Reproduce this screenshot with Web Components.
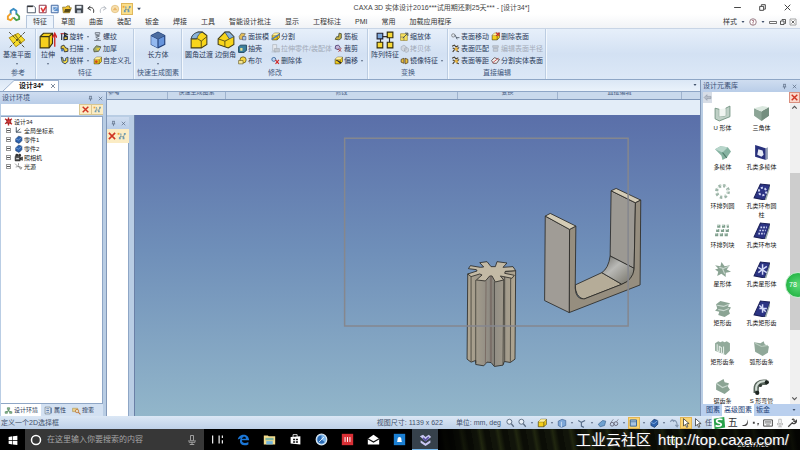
<!DOCTYPE html>
<html lang="zh-CN">
<head>
<meta charset="utf-8">
<title>CAXA 3D 实体设计</title>
<style>
html,body{margin:0;height:100%}
body{font:7px/10px "Liberation Sans","Noto Sans CJK SC",sans-serif;color:#2b3b5a;background:#000;overflow:hidden}
</style>
</head>
<body>
<cad-app></cad-app>
<script>
const BASE = `*{box-sizing:border-box}
button,input{font:inherit;color:inherit;background:none;border:0;padding:0;margin:0}
button{white-space:nowrap}`;

function define(tag, css, html, setup) {
  const t = document.createElement('template');
  customElements.define(tag, class extends HTMLElement {
    connectedCallback() {
      if (this.shadowRoot) return;
      t.innerHTML = `<style>${BASE}${css}</style>${typeof html === 'function' ? html(this) : html}`;
      this.attachShadow({mode: 'open'}).append(t.content.cloneNode(true));
      if (setup) setup(this);
    }
  });
}

const yellowBox = '<path d="M2 6l4-4h9v8l-4 4H2z" fill="#f5cf1c" stroke="#3c3510"/><path d="M2 6h9v8M11 6l4-4" fill="none" stroke="#3c3510"/><path d="M2 6l4-4h9l-4 4z" fill="#fff0a0"/>';
const holePlate = inner => `<path d="M1 14L7 1l9 1-5 14z" fill="#2b3484" stroke="#1b2058"/><path d="M11 16l5-14 .8 1L12.500 16z" fill="#9aa"/>${inner}`;
const ICONS = {
  logo: '<path d="M5 8V4l3-2 3 2v4" fill="none" stroke="#3d8fc4" stroke-width="2"/><path d="M5 7l-3 3v3l3 1 3-3" fill="none" stroke="#efa02a" stroke-width="2"/><path d="M11 7l3 3v3l-3 1-3-3" fill="none" stroke="#4aa04e" stroke-width="2"/>',
  newdoc: '<path d="M2 3h10l3 3v8H2z" fill="#fff" stroke="#4a5568" stroke-width="1.500"/><path d="M2 4h9" stroke="#333" stroke-width="2"/>',
  sheet: '<path d="M2 2h11v12H2z" fill="#fff" stroke="#843348" stroke-width="1.500"/><path d="M5 6l3 6 5-8" fill="none" stroke="#d33" stroke-width="2.500"/>',
  draft: '<path d="M2 2h11v12H2z" fill="#d7e6f8" stroke="#3f659e" stroke-width="1.500"/><path d="M5 5h7l2 6H6z" fill="#5c90cd"/><path d="M4 12l7-6" stroke="#fff"/>',
  folder: '<path d="M1 5h5l2-2h4v3h3l-3 8H2z" fill="#f1c233" stroke="#6d5b10"/><path d="M5 8h9l-2 5H3z" fill="#574a18"/>',
  save: '<path d="M2 2h12v12H2z" fill="#3d454f" stroke="#20252b"/><path d="M4 3h8v4H4z" fill="#e6edf3"/><path d="M5 10h6v4H5z" fill="#bcc6cf"/>',
  undo: '<path d="M3 7l4-4M3 7l5 3M3 7c5-3 11-1 9 7" fill="none" stroke="#333" stroke-width="1.500"/>',
  redo: '<path d="M13 7L9 3M13 7l-5 3M13 7C8 4 2 6 4 14" fill="none" stroke="#b5bbc2" stroke-width="1.500"/>',
  globe: '<circle cx="8" cy="8" r="6" fill="#f7dfae" stroke="#dcb56a"/><path d="M4 10l4-5 4 5z" fill="#eab768"/>',
  tree: '<path d="M5 4h2v2H5zM11 3h3v3h-3zM3 10h3v3H3zM9 10h3v3H9z" fill="#6e9db5"/><path d="M7 6l-3 5M12 5l-2 6M5 9h6" stroke="#59849a" fill="none"/><path d="M1 3h3v3H1z" fill="#f0a53a"/>',
  plane: '<path d="M1 6l8-4 6 6-8 6z" fill="#f7dc28" stroke="#a48410" stroke-width=".8"/><path d="M1 1l14 14M15 1L1 15" stroke="#40402a" stroke-dasharray="3 1" stroke-width=".8"/><path d="M6 3l6 8" stroke="#8c7614"/>',
  extrude: '<path d="M1 5l3-3h8v9l-3 4H1z" fill="#f5cf1c" stroke="#3c3510"/><path d="M1 5h8v10M9 5l3-3" fill="none" stroke="#3c3510"/><path d="M14 14V3M12 6l2-4 2 4" stroke="#cf2525" fill="none" stroke-width="1.200"/>',
  cuboid: '<path d="M2 4l6-3 6 3v8l-6 3-6-3z" fill="#6795dc" stroke="#203e78"/><path d="M2 4l6 3v8l-6-3z" fill="#94b9ef"/><path d="M2 4l6 3 6-3M8 7v8" fill="none" stroke="#203e78"/><path d="M2 4l6-3 6 3-6 3z" fill="#4c6c9f"/>',
  fillet: '<path d="M1 7c1-4 3-5 6-6h4l4 3v8l-5 3H1z" fill="#f8d51b" stroke="#403a15" stroke-width=".9"/><path d="M1 7c1-4 3-5 6-6h4c-3 1-4 3-5 6z" fill="#88b2d9" stroke="#273a55" stroke-width=".6"/><path d="M1 7h6l3 2v6M10 9l5-4" fill="none" stroke="#403a15" stroke-width=".7"/>',
  chamfer: '<path d="M1 7l6-6h4l4 4v7l-5 3-9-3z" fill="#f8d51b" stroke="#403a15" stroke-width=".9"/><path d="M7 1h4l4 4-4 2z" fill="#88b2d9" stroke="#273a55" stroke-width=".6"/><path d="M1 7l6 2 4-2M7 9v5" fill="none" stroke="#403a15" stroke-width=".7"/>',
  pattern: '<path d="M4 5h8M12 5v7M4 5v7" stroke="#333"/><path d="M1 2h5v5H1z" fill="#7ba7dc" stroke="#223"/><path d="M10 1h5v5h-5zM1 10h5v5H1zM10 10h5v5h-5z" fill="#f7d936" stroke="#332c08"/>',
  revolve: '<path d="M3 2v12M8 2l5 2-5 3zM7 9l6-1v5l-6 1z" fill="#f2d041" stroke="#20283a" stroke-width="2"/><path d="M1 3h6" stroke="#b33" stroke-width="2"/>',
  sweep: '<path d="M2 4l5-2 3 5 4 1v5l-6 1-2-6-4 1z" fill="#e7c93e" stroke="#23262f" stroke-width="1.500"/><path d="M2 9h4v4H2z" fill="#4474b7"/>',
  loft: '<path d="M2 2l2 9 5 3 5-4V2l-4 2v4L6 9 5 3z" fill="#f6dc45" stroke="#1c355f" stroke-width="1.500"/>',
  thread: '<path d="M4 1h8v3H4zM4 7h8M5 5l6 2-6 3 6 2-6 3M2 15h12" fill="none" stroke="#5b616b" stroke-width="1.300"/>',
  thicken: '<path d="M1 9l5-6 8 2-4 8-8 1z" fill="#9cab72" stroke="#4a4a30" stroke-width="1.300"/><path d="M5 8l8-1-4 5z" fill="#f1cf31"/>',
  hole: yellowBox + '<circle cx="6" cy="10" r="2.500" fill="#cc4a1c"/>',
  face: '<path d="M2 8l4-6 7 1-3 5v5H3z" fill="#e2bd5a" stroke="#4f4c40"/><path d="M8 8h6v6H8z" fill="#a8c6ea" stroke="#446"/>',
  shell: '<path d="M1 5l3-3h11v9l-4 4H1z" fill="#3c7f9d" stroke="#133a54" stroke-width="1.500"/><path d="M4 7h4v5H4z" fill="#e8e18d"/>',
  bool: '<circle cx="9" cy="7" r="5.500" fill="#f4d540" stroke="#5b4d16" stroke-width="1.300"/><path d="M1 8h8v6H1z" fill="#f4e594" stroke="#5b4d16"/>',
  split: yellowBox + '<path d="M1 13L15 4" stroke="#4978bd" stroke-width="2.500"/>',
  greydoc: '<path d="M3 1h7v11H3z" fill="#e5e8ed" stroke="#a2a9b3"/><path d="M6 8h9v6H6zM1 14h8" fill="#c2c8d0" stroke="#a2a9b3"/>',
  del: '<circle cx="5" cy="6" r="3.500" fill="#c1d6ef" stroke="#34629c" stroke-width="1.500"/><path d="M8 7l6 7M14 7l-6 7" stroke="#cf2929" stroke-width="2"/>',
  rib: '<path d="M2 13l3-5 3 1 1-7 4 1v8l-4 3z" fill="#c6b34a" stroke="#343b25" stroke-width="1.300"/>',
  trim: '<path d="M3 3l5-1 3 4-4 4-5-2z" fill="#c4b6d6" stroke="#4d3c72" stroke-width="1.500"/><path d="M7 9l6 4M13 7l-5 7" stroke="#a33" stroke-width="1.500"/>',
  offset: yellowBox + '<path d="M4 8c5 0 5 4 9 4" fill="none" stroke="#223" stroke-width="2"/>',
  scale: '<path d="M1 3h12v12H1z" fill="#f7e25d" stroke="#8a7420"/><path d="M1 9h6v6" fill="none" stroke="#556"/><path d="M5 11l8-8M9 2h5v5" fill="none" stroke="#345" stroke-width="1.500"/>',
  copy: '<path d="M2 5l5-3 4 3v5l-5 3-4-3zM8 8l4-2 3 2v5l-4 2-3-2z" fill="#d0d6de" stroke="#9aa3b0"/>',
  mirror: '<path d="M2 6l5-2v9l-5-2zM9 4l5 2v6l-5 2z" fill="#eabf3e" stroke="#4b3b20" stroke-width="1.300"/>',
  moveface: '<circle cx="4" cy="6" r="3" fill="#dfe7ef" stroke="#555"/><path d="M7 5l4 8M9 10h6" stroke="#4b5765" stroke-width="1.500"/>',
  matchface: '<path d="M2 4l4-2 3 3 4-2M3 7l5 2 5-2-3 5 4 2M3 14l4-5" fill="none" stroke="#3f3728" stroke-width="1.800"/><path d="M6 8l4-3 3 5-4 3z" fill="#e6b445"/>',
  delface: yellowBox + '<path d="M9 1l6 6M15 1L9 7" stroke="#c22" stroke-width="2"/>',
  radius: '<path d="M3 3h10v3H3zM4 8h8v5H4z" fill="#c9ced6" stroke="#9aa2ae"/>',
  splitface: '<path d="M1 8l5-5 9 3-5 7H4z" fill="#eee" stroke="#5c4a4a" stroke-width="1.500"/><path d="M3 12L13 4" stroke="#c44" stroke-width="1.500"/>',
  gear: '<path d="M2 3l12 10M2 12L14 3M8 1v14" stroke="#c12323" stroke-width="2.500"/><path d="M5 5h7v6H5z" fill="#d83a3a" stroke="#611"/>',
  axes: '<path d="M4 2v9h9M4 11l7-6" fill="none" stroke="#2c3d4c" stroke-width="1.500"/>',
  part: '<path d="M3 7l5-5 6 2v6l-5 5-6-3z" fill="#2d62ad" stroke="#102f5e"/><path d="M3 7l5 2 6-5" fill="none" stroke="#9ec5f1"/>',
  camera: '<path d="M2 6h9v8H2zM11 9l4-2v6l-4-2z" fill="#555" stroke="#111"/><circle cx="5" cy="4" r="2.500" fill="#333"/><circle cx="10" cy="4" r="2.500" fill="#333"/><path d="M4 9h5v2H4z" fill="#ddd"/>',
  light: '<path d="M2 3l4 4M3 9l4-1M8 2v4M7 7l5 6 2-3z" fill="#ddd" stroke="#555"/>',
  cross: '<path d="M3 3l10 10M13 3L3 13" stroke="#cf3323" stroke-width="2.500"/>',
  x: '<path d="M4 4l8 8M12 4l-8 8" stroke="#53647c" stroke-width="1.500"/>',
  pin: '<path d="M5 3h6M6 3v6M10 3v6M4 9h8M8 9v5" stroke="#53647c" stroke-width="1.500" fill="none"/>',
  wx: '<path d="M3 3l10 10M13 3L3 13" stroke="#333" stroke-width="1.600"/>',
  wmin: '<path d="M2 8h12" stroke="#333" stroke-width="1.600"/>',
  wmax: '<path d="M3 6h7v7H3zM6 5V3h7v8h-2" fill="none" stroke="#333" stroke-width="1.600"/>',
  mmin: '<path d="M1 7h14v4H1z" fill="#fff" stroke="#444" stroke-width="1.500"/>',
  mx: '<path d="M2 2h12v12H2z" fill="#fff" stroke="#777" stroke-width="1.300"/><path d="M5 5l6 6M11 5l-6 6" stroke="#444" stroke-width="1.600"/>',
  help: '<circle cx="8" cy="8" r="6.500" fill="#fff" stroke="#7a5560" stroke-width="1.500"/><path d="M6 6c1-3 5-1 3 1L8 9v1M8 11v2" stroke="#7a3344" fill="none" stroke-width="1.500"/>',
  caret: '<path d="M5 6h6l-3 4z" fill="#40506a"/>',
  up: '<path d="M4 10l4-4 4 4" fill="none" stroke="#555" stroke-width="2"/>',
  down: '<path d="M4 6l4 4 4-4" fill="none" stroke="#555" stroke-width="2"/>',
  back: '<path d="M2 8l5-5v3h7v4H7v3z" fill="#b7bec8" stroke="#8c96a4"/>',
  env: '<path d="M6 3h4v3H6zM2 10h4v3H2zM10 10h4v3h-4zM8 6v3M4 10l4-2 4 2" fill="#8fc08f" stroke="#4a7a5a"/>',
  prop: '<path d="M2 2h9v12H2z" fill="#fff" stroke="#456"/><path d="M4 5h5M4 8h5M4 11h5M13 3v10" stroke="#3c67a5" stroke-width="1.500"/>',
  find: '<path d="M1 4h9v6H1z" fill="#e9cf8b" stroke="#a98f48"/><circle cx="9" cy="9" r="3" fill="#fff8" stroke="#c27a3b" stroke-width="1.500"/><path d="M11 11l4 4" stroke="#c27a3b" stroke-width="2"/>',
  zoom: '<circle cx="7" cy="6" r="4" fill="#e9f0f7" stroke="#5a6b80" stroke-width="1.500"/><path d="M10 9l4 5" stroke="#5a6b80" stroke-width="2"/>',
  sbox: yellowBox,
  bluebox: '<path d="M2 5l6-3 6 2v8l-7 3-5-3z" fill="#7da7d8" stroke="#3b5f8e"/><path d="M7 6v9" stroke="#fff"/>',
  sketch: '<path d="M2 4l5 3 6-3M7 7v6l4 2" fill="none" stroke="#556b86" stroke-width="1.800"/>',
  brush: '<path d="M2 10l7-6 5 1-2 7-7 2z" fill="#6fa1cf" stroke="#355e8a"/>',
  glasses: '<circle cx="5" cy="10" r="3" fill="none" stroke="#667" stroke-width="1.500"/><circle cx="11" cy="9" r="3" fill="none" stroke="#667" stroke-width="1.500"/><path d="M3 7l4-5M12 6l3-4" stroke="#667"/>',
  frame: '<path d="M2 3h10v10H2z" fill="#a9c4e2" stroke="#3d6697" stroke-width="1.500"/><path d="M2 6h10" stroke="#3d6697"/>',
  turn: '<path d="M2 6l3-3 3 3M5 4c6-1 8 2 8 9M10 11l3 3 2-3" fill="none" stroke="#8497b0" stroke-width="1.800"/>',
  arrow: '<path d="M4 1v12l3-3 2 5 2-1-2-5h4z" fill="#fff" stroke="#333" stroke-width="1.200"/>',
  win: '<path d="M1 3l6-1v6H1zM8 2l7-1v7H8zM1 9h6v6l-6-1zM8 9h7v7l-7-1z" fill="#fff"/>',
  ring: '<circle cx="8" cy="8" r="6" fill="none" stroke="#fff" stroke-width="2"/>',
  mic: '<path d="M6 2h4v7H6zM4 8v3h8V8M8 11v3M5 14h6" fill="none" stroke="#aaa" stroke-width="1.200"/>',
  tasks: '<path d="M2 3v10M10 3v10M14 3v3M14 9v4" stroke="#eee" stroke-width="1.500"/>',
  edge: '<path d="M1 8C2 1 14-1 15 9H6c0 4 5 4 8 2v3C8 17 2 14 4 8c1-2 3-3 5-3M6 7h5C11 4 7 4 6 7" fill="#1b76d6"/>',
  files: '<path d="M1 3h5l1 1h8v10H1z" fill="#f4dd8d"/><path d="M3 6h10v3H3z" fill="#7fb6a2"/><path d="M4 10h8v4H4z" fill="#73b4dd"/>',
  store: '<path d="M2 5l12-1v10L2 13z" fill="#fff"/><path d="M5 5V2h5v3" fill="none" stroke="#fff"/><path d="M5 7h2.500v2H5zM8.500 7H11v2H8.500zM5 10h2.500v2H5zM8.500 10H11v2H8.500z" fill="#111"/>',
  compass: '<circle cx="8" cy="8" r="6.500" fill="#7eb8ec" stroke="#d8e6f2" stroke-width="1.500"/><path d="M3 8a5 5 0 015-5v5l4 3a5 5 0 01-9-3z" fill="#2c6ab3"/><path d="M5 11l6-6" stroke="#fff"/>',
  mi: '<path d="M1 1h14v14H1z" fill="#d92f35"/><path d="M5 5v6M8 5v6M11 5v6" stroke="#fff" stroke-width="1.200"/>',
  mail: '<path d="M1 7l7-5 7 5v7H1z" fill="#fff"/><path d="M1 7l7 4 7-4" fill="none" stroke="#111" stroke-width="1.500"/>',
  qq: '<path d="M1 1h14v14H1z" fill="#1b7fd2"/><path d="M8 5c3 0 2 4 3 6H5c1-2 0-6 3-6z" fill="#fff"/>',
  caxa: '<path d="M1 4l4-2 3 3 4-3 3 3-7 5zM2 9l6 4 6-4v3l-6 4-6-4z" fill="#c9c7f2"/><path d="M5 6l3 3 4-4" stroke="#5b51a6" fill="none" stroke-width="2"/>',
  sogou: '<path d="M2 3L14 1l1 12-12 2z" fill="#28a14a"/><path d="M12 4C5 2 3 7 8 8s2 5-4 3" fill="none" stroke="#fff" stroke-width="2"/>',
  moon: '<path d="M11 2c2 8-4 10-8 9 5 5 13 0 8-9z" fill="#444"/>',
  dots: '<path d="M3 6h3v3H3zM10 8h3l-2 5z" fill="#444"/>',
  keys: '<path d="M1 3h14v10H1z" fill="none" stroke="#444" stroke-width="1.500"/><path d="M3 6h10M3 8h10M5 11h6" stroke="#444"/>',
  wrench: '<path d="M2 14l7-7M8 3c3-3 4 0 3 2l2 1 2-2c1 4-5 7-7 3" stroke="#444" stroke-width="2" fill="none"/>',
  tray: '<circle cx="8" cy="8" r="6" fill="#9ccc2e"/><path d="M5 8l2 3 5-6" stroke="#fff" stroke-width="2" fill="none"/>',
  ushape: '<path d="M1 3l4 1v7l6-1V3l4-2v10L5 15l-4-2z" fill="#bfd0c6" stroke="#6d8f7c" stroke-width=".8"/><path d="M5 4l6-1v7l-6 1z" fill="#f0f5f1"/>',
  tri: '<path d="M1 3l7 3 7-4v8l-7 5-7-5z" fill="#8ca596"/><path d="M8 6v9l7-5V2z" fill="#748e7f"/><path d="M1 3l8-2 6 1-7 4z" fill="#dbe8df"/>',
  poly: '<path d="M1 5l5-3 7 1 3 4-4 6-4 2-1-4z" fill="#86b3a2"/><path d="M1 5l5-3 7 1-5 5z" fill="#b8d6cb"/><path d="M8 8l4 5" stroke="#4d7968"/>',
  hpoly: '<path d="M2 1l10 3v11L2 12z" fill="#28307c"/><path d="M12 4l2-1v11l-2 1z" fill="#8f9ab2"/><path d="M5 5l4 1 1 4-2 2-4-2z" fill="#e8ecf6"/>',
  ringset: '<circle cx="8" cy="8" r="5.500" fill="none" stroke="#9db5a8" stroke-width="3" stroke-dasharray="2.200 2.120"/><circle cx="8" cy="7" r="5" fill="none" stroke="#dfe9e2" stroke-width="1" stroke-dasharray="2 2.200"/>',
  hring: holePlate('<circle cx="9" cy="8" r="3.500" fill="none" stroke="#cdd4f4" stroke-width="1.800" stroke-dasharray="2 1.600"/>'),
  gridset: '<path d="M3 4h11M2 8h12M1 12h12" stroke="#7f9f8d" stroke-width="3" stroke-dasharray="3 1.500"/><path d="M3 3h11M2 7h12M1 11h12" stroke="#cfded5" stroke-dasharray="2 2.500"/>',
  hgrid: holePlate('<path d="M7 5h6M6 8h6M5 11h6" stroke="#cdd4f4" stroke-width="1.600" stroke-dasharray="1.600 1"/>'),
  star: '<path d="M1 4l5 1 1-4 3 4 5-1-3 4 4 2-5 1v4l-4-3-4 2 1-4-3-2 3-1z" fill="#8ba494"/><path d="M5 6l4 1 5-2M8 7l2 5" stroke="#c9d8cf" fill="none"/>',
  hstar: holePlate('<path d="M9 3v10M5 6l8 5M13 5l-8 6" stroke="#d5dbf8" stroke-width="1.400"/>'),
  sgear: '<path d="M2 4l4-3 5 1 4 1-2 3 3 1-2 3 1 3-5 3-6-2 1-3-4-1 2-2z" fill="#8ba494"/><path d="M3 5l6 1 5-2M4 9l5 1 5-2" stroke="#cbdad1" fill="none"/>',
  hgear: holePlate('<path d="M6 8h7M9 4v8M6 5l6 6" stroke="#d5dbf8" stroke-width="1.400"/>'),
  rack: '<path d="M1 4l3-2 2 1 2-1 2 1 2-1 3 2v7l-4 4-10-4z" fill="#92aa9b"/><path d="M3 5v6l2 1V7l2 1v5l2 1V7" fill="none" stroke="#e3ece6"/>',
  arcrack: '<path d="M1 3l6 1 3-2 1 3 4 2-1 6-5 3-7-4z" fill="#90a899"/><path d="M2 4l6 3 6-1" stroke="#b7cabd" fill="none"/>',
  spring: '<path d="M2 5l7-4 1 3 4 1-1 3 2 3-5 4-8-4z" fill="#8ba494"/><path d="M2 5l6 4 5-2" stroke="#c9d8cf" fill="none"/>',
  pipe: '<path d="M3 14V10c0-4 3-6 7-6h3" fill="none" stroke="#59665d" stroke-width="5"/><path d="M3 12V9c0-3 3-6 7-6h2" fill="none" stroke="#d3ddd6" stroke-width="2"/><circle cx="4" cy="14" r="2" fill="#1e2521"/><circle cx="13" cy="4" r="2" fill="#1e2521"/><circle cx="7" cy="7" r="1.500" fill="#333c36"/>'
};
define('x-icon', `:host{display:block;flex:none;width:var(--s,8px);height:var(--s,8px)}svg{display:block;width:100%;height:100%}`,
  el => `<svg viewBox="0 0 16 16" aria-hidden="true">${ICONS[el.getAttribute('name')] || ''}</svg>`);

/* large ribbon command: icon over label */
define('big-tool', `:host{display:block}
button{display:flex;flex-direction:column;align-items:center;gap:1px;width:100%;--s:18px}
.c{--s:6px}`,
  el => `<button><x-icon name="${el.getAttribute('icon')}"></x-icon><slot></slot><x-icon class="c" name="${el.hasAttribute('menu') ? 'caret' : ''}"></x-icon></button>`);

/* small ribbon command: icon beside label */
define('small-tool', `:host{display:block;height:11px}
button{display:flex;align-items:center;gap:1px;height:11px;--s:9px}
:host([off]) button{color:#a3abb8}.c{--s:6px}`,
  el => `<button${el.hasAttribute('off') ? ' disabled' : ''}><x-icon name="${el.getAttribute('icon')}"></x-icon><slot></slot>${el.hasAttribute('menu') ? '<x-icon class="c" name="caret"></x-icon>' : ''}</button>`);

define('tool-stack', `:host{display:grid;gap:1px;align-content:start}`, `<slot></slot>`);

define('ribbon-group', `:host{display:flex;flex-direction:column;justify-content:space-between;border-right:1px solid #bccde2;box-shadow:1px 0 #f3f8fd;padding:2px 2px 2px 3px;flex:none;width:var(--w)}
.t{display:flex;justify-content:space-between;height:36px}
.n{text-align:center;line-height:9px;color:#42587c;white-space:nowrap}`,
  el => `<div class="t"><slot></slot></div><div class="n">${el.getAttribute('name')}</div>`);

const tools = list => '<tool-stack>' + list.map(([i, t, f = '']) => `<small-tool icon="${i}" ${f}>${t}</small-tool>`).join('') + '</tool-stack>';
define('app-ribbon', `:host{display:flex;height:52px;background:linear-gradient(#e6effa,#d3e1f3 50%,#dce8f7);border-top:1px solid #c8d5e6;border-bottom:1px solid #8ea6c6}`,
`<ribbon-group name="参考" style="--w:36px"><big-tool icon="plane" menu>基准平面</big-tool></ribbon-group>
<ribbon-group name="特征" style="--w:98px"><big-tool icon="extrude" menu>拉伸</big-tool>
${tools([['revolve','旋转','menu'],['sweep','扫描','menu'],['loft','放样','menu']])}
${tools([['thread','螺纹'],['thicken','加厚'],['hole','自定义孔']])}</ribbon-group>
<ribbon-group name="快速生成图素" style="--w:48px"><big-tool icon="cuboid" menu style="margin:0 auto">长方体</big-tool></ribbon-group>
<ribbon-group name="修改" style="--w:186px"><big-tool icon="fillet">圆角过渡</big-tool><big-tool icon="chamfer">边倒角</big-tool>
${tools([['face','面拔模'],['shell','抽壳'],['bool','布尔']])}
${tools([['split','分割'],['greydoc','拉伸零件/装配体','off'],['del','删除体']])}
${tools([['rib','筋板'],['trim','裁剪'],['offset','偏移','menu']])}</ribbon-group>
<ribbon-group name="变换" style="--w:80px"><big-tool icon="pattern">阵列特征</big-tool>
${tools([['scale','缩放体'],['copy','拷贝体','off'],['mirror','镜像特征','menu']])}</ribbon-group>
<ribbon-group name="直接编辑" style="--w:98px">
${tools([['moveface','表面移动'],['matchface','表面匹配'],['matchface','表面等距']])}
${tools([['delface','删除表面'],['radius','编辑表面半径','off'],['splitface','分割实体表面']])}</ribbon-group>`);

define('app-header', `:host{display:grid;grid-template:15px 13px / 26px 1fr;background:linear-gradient(#fff,#fff 50%,#f1f3f6)}
.logo{grid-row:1/3;display:grid;place-items:center;--s:15px}
.bar,.tabs,.qat,.win{display:flex;align-items:center}
.qat{gap:2px;--s:10px;padding-top:2px}.qat button.on{background:#fbdf8b;outline:1px solid #e0b85c}
h1{flex:1;margin:0;font:inherit;text-align:center;color:#444;padding-left:6px;white-space:nowrap}
.win{gap:16px;padding-right:8px;--s:9px}
.tabs [role=tab]{padding:0 7px;height:13px;color:#333}
.tabs [aria-selected=true]{background:#edf4fc;border:1px solid #b5c6dc;border-bottom:0;padding:0 6px}
.mdi{margin-left:auto;display:flex;align-items:center;gap:2px;padding-right:3px;--s:8px;color:#333}`,
`<button class="logo" aria-label="菜单"><x-icon name="logo"></x-icon></button>
<div class="bar"><div class="qat">${['newdoc','sheet','draft','folder','save','undo','redo','globe','tree','caret'].map(i => `<button aria-label="${i}" ${i === 'tree' ? 'class="on"' : ''}><x-icon name="${i}"></x-icon></button>`).join('')}</div>
<h1>CAXA 3D 实体设计2016***试用期还剩25天*** - [设计34*]</h1>
<div class="win">${['wmin','wmax','wx'].map(i => `<button aria-label="${i}"><x-icon name="${i}"></x-icon></button>`).join('')}</div></div>
<div class="tabs" role="tablist">${['特征','草图','曲面','装配','钣金','焊接','工具','智能设计批注','显示','工程标注','PMI','常用','加载应用程序'].map((t, i) => `<button role="tab" aria-selected="${!i}">${t}</button>`).join('')}
<div class="mdi"><button>样式</button>${['caret','help','caret','mmin','wmax','mx'].map(i => `<button aria-label="${i}"><x-icon name="${i}"></x-icon></button>`).join('')}</div></div>`);

define('doc-tabs', `:host{display:flex;align-items:flex-end;height:12px;background:linear-gradient(#dbe7f5,#eaf2fb);border-bottom:1px solid #8ea6c6;flex:none}
svg{display:block;width:12px;height:11px;margin-left:3px}
.tab{display:flex;align-items:center;height:11px;background:#fff;border:1px solid #9db2cf;border-width:1px 1px 0 0;padding:0 1px 0 4px;gap:5px;font-weight:bold;color:#111}
.m{margin:0 1px 2px auto}`,
`<svg viewBox="0 0 12 11"><path d="M0 11L11 .500h1V11z" fill="#fff"/><path d="M0 11L11 .500h1" fill="none" stroke="#9db2cf"/></svg><button class="tab">设计34*<x-icon name="x"></x-icon></button><button class="m" aria-label="窗口列表"><x-icon name="caret"></x-icon></button>`);

define('dock-title', `:host{display:flex;align-items:center;height:12px;flex:none;padding:0 2px;background:linear-gradient(#cfddf0,#b9cde8);color:#3a4f74}
div{margin-left:auto;display:flex;gap:3px;--s:7px}`,
`<slot></slot><div><button aria-label="固定"><x-icon name="pin"></x-icon></button><button aria-label="关闭"><x-icon name="x"></x-icon></button></div>`);

define('tree-row', `:host{display:flex;align-items:center;gap:1px;height:9px;font-size:6px;color:#222;padding-left:var(--d,0);white-space:nowrap;--s:9px}
i{width:5px;height:5px;border:1px solid #999;background:linear-gradient(#555,#555) center/3px 1px no-repeat #fff;margin-right:2px}`,
  el => `${el.hasAttribute('open') ? '' : '<i></i>'}<x-icon name="${el.getAttribute('icon')}"></x-icon><slot></slot>`);

define('design-tree', `:host{display:flex;flex-direction:column;flex:none;width:107px;background:#b9cde4;border-right:1px solid #8298b8}
.p{margin:0 3px 0 1px;flex:1;display:flex;flex-direction:column;min-height:0}
.s{display:flex;height:11px;margin-bottom:1px}.s input{flex:1;min-width:0;background:#fff}
.s button{--s:9px;padding:0 1px;background:#fbecc4;border:1px solid #d9c792;border-width:1px 0 1px 1px;height:11px}
.l{flex:1;background:#fff;border:1px solid #8ea6c6;border-left:0;padding:0 3px}
.t{display:flex;height:12px;background:#d3e1f2;font-size:6px;--s:9px}
.t button{display:flex;align-items:center;gap:1px;padding:0 3px}.t .on{background:#fff}`,
`<dock-title>设计环境</dock-title><div class="p">
<div class="s"><input aria-label="搜索设计环境"><button aria-label="清除"><x-icon name="cross"></x-icon></button><button aria-label="层级"><x-icon name="tree"></x-icon></button></div>
<div class="l"><tree-row icon="gear" open>设计34</tree-row>${[['axes','全局坐标系'],['part','零件1'],['part','零件2'],['camera','照相机'],['light','光源']].map(([i, t]) => `<tree-row icon="${i}" style="--d:2px">${t}</tree-row>`).join('')}</div>
<div class="t"><button class="on"><x-icon name="env"></x-icon>设计环境</button><button><x-icon name="prop"></x-icon>属性</button><button><x-icon name="find"></x-icon>搜索</button></div></div>`);

define('model-view', `:host{display:block;flex:1;min-width:0;background:linear-gradient(#5a6fa9,#6f8fb9 45%,#92b6ca);border-left:1px solid #6a80a6;overflow:hidden}
svg{display:block;width:100%;height:100%}`,
`<svg viewBox="134 115 566 301" role="img" aria-label="三维模型">
<defs><linearGradient id="f" x1="0" y1="0" x2="1" y2="1"><stop offset="0" stop-color="#6d6c66"/><stop offset=".4" stop-color="#b9b9b6"/><stop offset="1" stop-color="#6f6c60"/></linearGradient>
<linearGradient id="g"><stop offset="0" stop-color="#b0a691"/><stop offset=".5" stop-color="#8c8982"/><stop offset="1" stop-color="#b0a691"/></linearGradient></defs>
<g transform="translate(440 170) scale(.3333)" stroke="#292824" stroke-width="2.500" stroke-linejoin="round">
<path d="M513 62L586 98L582 295L510 258Z" fill="#9c9993"/>
<path d="M485 308L545 343L430 388Q405 380 405 345Z" fill="#b5ac98"/>
<path d="M510 258L582 295Q582 330 545 343L485 308Q505 295 510 258Z" fill="url(#f)"/>
<path d="M513 62L528 55L602 90L586 98Z" fill="#d4ccb7"/>
<path d="M388 178L407 168L405 355Q407 389 432 387L545 343Q578 330 582 298L586 98L602 90L600 345L387 428Z" fill="#968e7f"/>
<path d="M315 138L388 178L387 428L313 392Z" fill="#a09c96"/>
<path d="M315 138L330 130L407 168L388 178Z" fill="#d4ccb7"/>
<path d="M82 312L80 568L92 577L106 572L106 584L130 588L140 577L152 578L162 590L188 586L192 575L210 578L224 568L226 302Z" fill="url(#g)"/>
<path d="M137 334L135 582M154 320V578M150 320V576" stroke="#74665e"/><path d="M92 320V575M106 330V580M162 335V588M190 330L188 584M193 318V574M211 325L210 576" fill="none" stroke-width="2"/>
<path d="M118 278L140 275L152 290L165 290L170 275L200 279L188 292L218 290L226 302L195 304L193 310L222 316L215 325L180 318L190 330L165 336L155 318L148 318L135 333L108 330L125 315L118 312L92 320L82 312L110 303L108 299L84 296L90 287L120 292L130 291Z" fill="#c3baa5"/>
</g>
<path d="M344 138H628V326H344Z" fill="none" stroke="#85878e" stroke-width="1.500"/></svg>`);

/* remains of an overlapped window around the model view */
define('view-stack', `:host{flex:1;min-width:0;display:flex;flex-direction:column}
.g{display:grid;grid-template-columns:61px 58px 232px 100px 124px 1fr;height:8px;overflow:hidden;background:#c9d9ec;border-bottom:1px solid #7f97b9;font-size:6px;line-height:1px;color:#42587c;text-align:center}
.g span{border-right:1px solid #9fb3ce;height:8px}.g span:first-child{text-align:left;padding-left:1px}
.b{height:15px;background:#e3edf8;flex:none}
.r{flex:1;display:flex;min-height:0}
.o{width:27px;display:flex;flex-direction:column;background:#b9cde4;padding-right:5px}
.o dock-title{margin-top:2px}
.o .s{display:flex;align-items:center;height:14px;--s:10px;background:#fbecc4}
.o .w{flex:1;background:#fff;border-right:1px solid #8ea6c6}`,
`<div class="g"><span>参考</span><span>快速生成图素</span><span>修改</span><span>变换</span><span>直接编辑</span></div><div class="b"></div>
<div class="r"><div class="o"><dock-title></dock-title><div class="s"><x-icon name="cross"></x-icon><x-icon name="tree"></x-icon></div><div class="w"></div></div><model-view></model-view></div>`);

define('catalog-item', `:host{display:block;height:39px}
button{display:flex;flex-direction:column;align-items:center;gap:2px;width:100%;font-size:6px;line-height:9px;color:#222;white-space:normal;--s:17px}span{max-width:32px}`,
  el => `<button><x-icon name="${el.getAttribute('icon')}"></x-icon><span><slot></slot></span></button>`);

define('element-catalog', `:host{display:flex;flex-direction:column;flex:none;width:100px;background:#b9cde4;border-left:1px solid #8298b8;position:relative}
.s{display:flex;height:11px;--s:9px;padding-left:2px;flex:none}.s button{background:#d7dde6}.s .d{background:#fbd8cc;border:1px solid #d98f7f}.s input{flex:1;min-width:0;background:#fff}
.l{flex:1;min-height:0;display:flex;background:#fff;margin-left:2px;overflow:hidden}
.c{flex:1;display:grid;grid-template-columns:39px 39px;align-content:start;padding:2px 0 0}
.bar{width:10px;background:#f0f0f0;display:grid;grid-template-rows:10px 60fr 157fr 64fr 10px;--s:9px}.bar i{grid-row:3;background:#cdcdcd}.bar x-icon:last-child{grid-row:5}
.t{display:flex;align-items:center;height:12px;flex:none;padding-left:3px;color:#25447a;background:#b9cfee}
.t button{padding:0 2px;height:12px}.t .on{background:#fff}.t .m{margin-left:auto}
.ball{position:absolute;right:-11px;top:192px;width:26px;height:26px;border-radius:50%;background:radial-gradient(#5bd978,#2ebc4e 60%,#1fa23f);border:1px solid #c6eccf;color:#fff;text-align:left;padding-left:3px}`,
`<dock-title>设计元素库</dock-title>
<div class="s"><button aria-label="后退"><x-icon name="back"></x-icon></button><input aria-label="搜索元素"><button class="d" aria-label="清除"><x-icon name="cross"></x-icon></button></div>
<div class="l"><div class="c">${[['ushape','U 形体'],['tri','三角体'],['poly','多棱体'],['hpoly','孔类多棱体'],['ringset','环排列圆'],['hring','孔类环布圆柱'],['gridset','环排列块'],['hgrid','孔类环布块'],['star','星形体'],['hstar','孔类星形体'],['sgear','矩形齿'],['hgear','孔类矩形齿'],['rack','矩形齿条'],['arcrack','弧形齿条'],['spring','锯齿条'],['pipe','S 形弯管']].map(([i, t]) => `<catalog-item icon="${i}">${t}</catalog-item>`).join('')}</div>
<div class="bar"><x-icon name="up"></x-icon><i></i><x-icon name="down"></x-icon></div></div>
<div class="t"><button>图素</button><button class="on">高级图素</button><button>钣金</button><button class="m" aria-label="更多"><x-icon name="caret"></x-icon></button></div>
<button class="ball">78</button>`);

define('status-bar', `:host{display:flex;align-items:center;height:13px;flex:none;padding-left:1px;background:linear-gradient(#dbe7f5,#bfd1e8);color:#42526c;white-space:nowrap}
.v{margin-left:auto;padding-right:13px}.i{display:flex;align-items:center;gap:2px;padding-left:4px;--s:10px}.i .c{--s:6px}.i .on{background:#fbd573;outline:1px solid #e2b553}
.ime{display:flex;align-items:center;justify-content:space-between;width:88px;height:13px;background:#fbfcfd;--s:10px;font-size:10px;color:#333;padding-right:3px}.ime .g{--s:14px}`,
`<span>定义一个2D选择框</span><span class="v">视图尺寸: 1139 x 622</span><span>单位: mm, deg</span>
<div class="i">${['zoom','zoom','caret','sbox','caret','bluebox','caret','sketch','caret','brush','glasses','caret','frame!','caret','part','caret','turn','arrow!','arrow'].map(i => { const n = i.replace('!', ''); return n === 'caret' ? '<x-icon class="c" name="caret"></x-icon>' : `<button aria-label="${n}" ${i === n ? '' : 'class="on"'}><x-icon name="${n}"></x-icon></button>`; }).join('')}<span>任</span></div>
<div class="ime"><x-icon class="g" name="sogou"></x-icon>五<x-icon name="moon"></x-icon><x-icon name="dots"></x-icon><x-icon name="keys"></x-icon><x-icon name="mic"></x-icon><x-icon name="wrench"></x-icon></div>`);

define('task-bar', `:host{display:flex;height:21px;flex:none;background:#000;position:relative;color:#fff}
.st{width:25px;display:grid;place-items:center;--s:10px}
label{display:flex;align-items:center;gap:5px;width:179px;background:#373737;padding:0 6px 0 5px;--s:12px;font-size:8px}
input{flex:1;min-width:0;outline:0}input::placeholder{color:#a5a5a5;opacity:1}
.a{width:26px;display:grid;place-items:center;--s:13px}.a:last-of-type{background:#36414b;border-bottom:1px solid #76b9ed}
.tray{flex:1;display:flex;align-items:flex-end;justify-content:flex-end;gap:60px;padding:0 31px 0 0;--s:10px;background:linear-gradient(90deg,#000,#0000 12%,#0000 45%,#000a),repeating-linear-gradient(80deg,#11140a 0 5px,#20260f 8px,#0b0d06 13px 18px)}
.tray x-icon{align-self:center}
.w{position:absolute;right:11px;top:1px;font-size:15px;line-height:20px;color:#fff;text-shadow:1px 1px #222,-1px 0 #333;white-space:nowrap;display:flex;gap:7px;align-items:center}
.w a{color:inherit;text-decoration:none}`,
`<button class="st" aria-label="开始"><x-icon name="win"></x-icon></button><label><x-icon name="ring"></x-icon><input placeholder="在这里输入你要搜索的内容" aria-label="搜索"><x-icon name="mic"></x-icon></label>
${['tasks','edge','files','store','compass','mi','mail','qq','caxa'].map(i => `<button class="a" aria-label="${i}"><x-icon name="${i}"></x-icon></button>`).join('')}
<div class="tray"><x-icon name="tray"></x-icon><time>2017/7/20</time></div><div class="w"><span>工业云社区</span><a href="http://top.caxa.com/">http://top.caxa.com/</a></div>`);

define('cad-app', `:host{display:flex;flex-direction:column;height:100vh;background:#dbe7f5}
.m{flex:1;display:flex;min-height:0}.l{flex:1;min-width:0;display:flex;flex-direction:column}.b{flex:1;display:flex;min-height:0}`,
`<app-header></app-header><app-ribbon></app-ribbon>
<div class="m"><div class="l"><doc-tabs></doc-tabs><div class="b"><design-tree></design-tree><view-stack></view-stack></div></div><element-catalog></element-catalog></div>
<status-bar></status-bar><task-bar></task-bar>`);
</script>
</body>
</html>
